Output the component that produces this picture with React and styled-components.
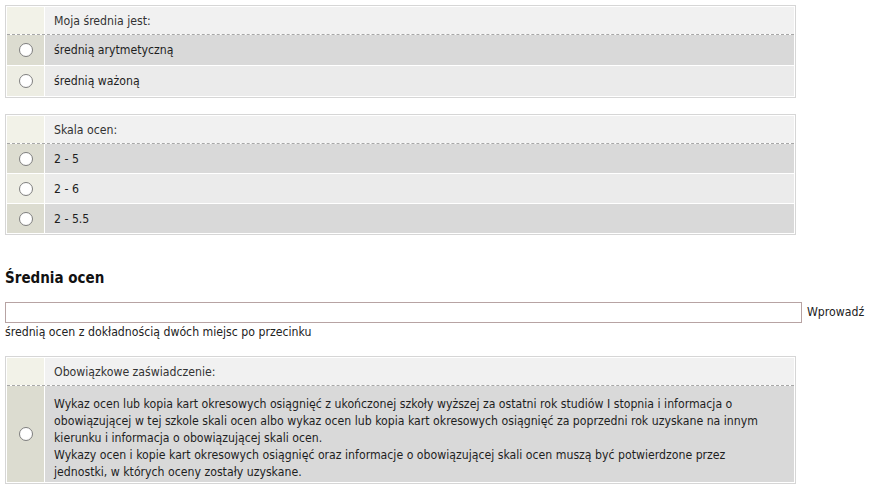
import styled, { createGlobalStyle } from 'styled-components';

const GlobalStyle = createGlobalStyle`
  html, body {
    margin: 0;
    padding: 0;
    background: #fff;
  }
  body {
    font-family: "DejaVu Sans Condensed", "DejaVu Sans", Verdana, sans-serif;
    font-size: 12.2px;
    color: #222;
  }
`;

const Page = styled.div`
  padding: 5px 0 0 5px;
`;

const Choice = styled.div`
  width: 791px;
  box-sizing: border-box;
  border: 1px solid #d6d6d6;
  padding: 1px;
  display: flex;
  flex-direction: column;
  gap: 1px;
  margin-bottom: ${props => props.$spacing || 0}px;
`;

const Row = styled.label`
  display: grid;
  grid-template-columns: 37px 1fr;
  column-gap: 1px;
  min-height: ${props => props.$height || 29}px;
  cursor: pointer;
`;

const HeaderRow = styled.div`
  display: grid;
  grid-template-columns: 37px 1fr;
  column-gap: 1px;
  height: 27px;
  border-bottom: 1px dashed #a8a8a8;
  margin-bottom: -1px;
`;

const MarkCell = styled.div`
  display: flex;
  align-items: center;
  justify-content: center;
  background: ${props => props.$bg};
`;

const TextCell = styled.div`
  display: flex;
  align-items: center;
  padding: ${props => props.$padding || '1px 9px 0'};
  background: ${props => props.$bg};
  color: ${props => props.$muted ? '#333' : '#1e1e1e'};
  line-height: 17px;
`;

const Radio = styled.input.attrs({ type: 'radio' })`
  appearance: none;
  margin: 0;
  width: 14px;
  height: 14px;
  border-radius: 50%;
  border: 1px solid #808080;
  background: radial-gradient(circle at 40% 35%, #fff 60%, #eaeaea 100%);
  box-sizing: border-box;
  cursor: pointer;

  &:checked {
    background: radial-gradient(circle, #333 30%, #fff 36%);
  }
`;

const Heading = styled.h3`
  margin: 33px 0 14px;
  font-size: 15px;
  font-weight: bold;
  color: #111;
  line-height: 20px;
`;

const Field = styled.div`
  line-height: 18px;
  color: #222;
  margin-bottom: 15px;
`;

const Input = styled.input`
  width: 797px;
  height: 21px;
  box-sizing: border-box;
  border: 1px solid #b7a3a3;
  margin: 0 5px 0 0;
  padding: 1px 3px;
  vertical-align: middle;
  font: inherit;
`;

const OddBg = { mark: '#dcdcd0', text: '#d9d9d9' };
const EvenBg = { mark: '#ededE3', text: '#ebebeb' };
const HeadBg = { mark: '#f2f2e8', text: '#f1f1f1' };

const Question = ({ title, name, options, spacing }) => (
  <Choice $spacing={spacing}>
    <HeaderRow>
      <MarkCell $bg={HeadBg.mark} />
      <TextCell $bg={HeadBg.text} $muted>{title}</TextCell>
    </HeaderRow>
    {options.map((opt, i) => {
      const bg = i % 2 === 0 ? OddBg : EvenBg;
      return (
        <Row key={i} $height={opt.height}>
          <MarkCell $bg={bg.mark}>
            <Radio name={name} />
          </MarkCell>
          <TextCell $bg={bg.text} $padding={opt.padding}>{opt.label}</TextCell>
        </Row>
      );
    })}
  </Choice>
);

const App = () => (
  <Page>
    <GlobalStyle />
    <Question
      title="Moja średnia jest:"
      name="typ"
      spacing={16}
      options={[{ label: 'średnią arytmetyczną', height: 30 }, { label: 'średnią ważoną', height: 30 }]}
    />
    <Question
      title="Skala ocen:"
      name="skala"
      options={[{ label: '2 - 5' }, { label: '2 - 6' }, { label: '2 - 5.5' }]}
    />

    <Heading>Średnia ocen</Heading>
    <Field>
      <Input type="text" />
      Wprowadź średnią ocen z dokładnością dwóch miejsc po przecinku
    </Field>

    <Question
      title="Obowiązkowe zaświadczenie:"
      name="zaswiadczenie"
      options={[
        {
          height: 96,
          padding: '9px 9px 1px',
          label: (
            <span>
              Wykaz ocen lub kopia kart okresowych osiągnięć z ukończonej szkoły wyższej za ostatni rok studiów I stopnia i informacja o obowiązującej w tej szkole skali ocen albo wykaz ocen lub kopia kart okresowych osiągnięć za poprzedni rok uzyskane na innym kierunku i informacja o obowiązującej skali ocen.
              <br />
              Wykazy ocen i kopie kart okresowych osiągnięć oraz informacje o obowiązującej skali ocen muszą być potwierdzone przez
              <br />
              jednostki, w których oceny zostały uzyskane.
            </span>
          ),
        },
      ]}
    />
  </Page>
);

export default App;
